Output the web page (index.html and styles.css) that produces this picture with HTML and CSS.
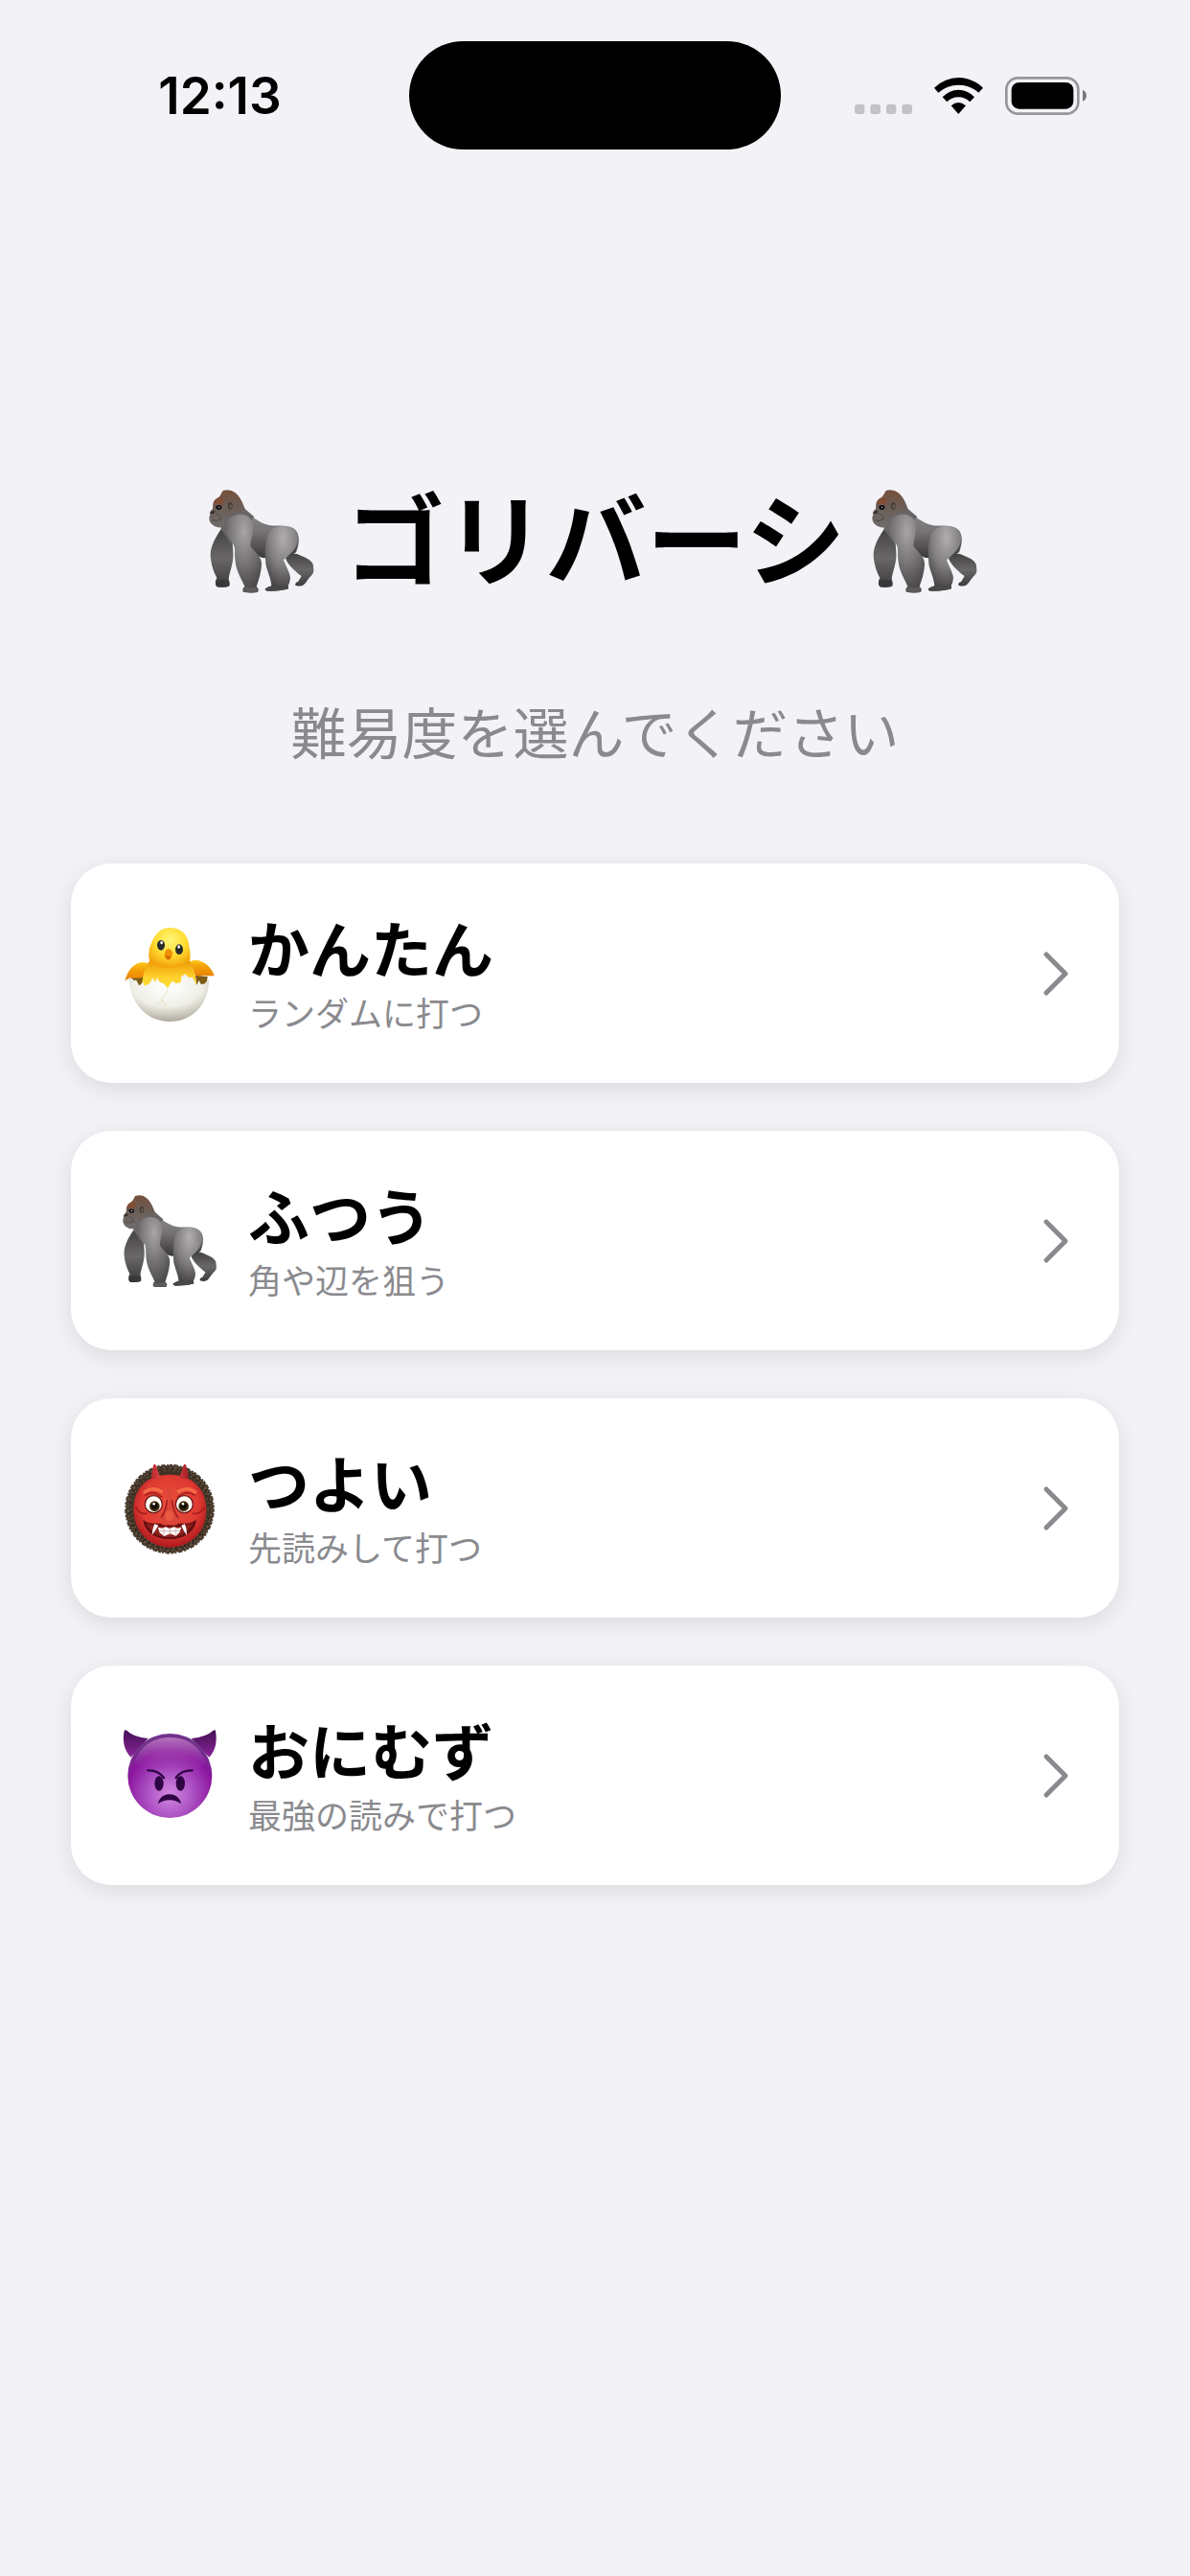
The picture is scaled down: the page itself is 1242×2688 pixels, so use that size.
FILE: index.html
```
<!DOCTYPE html>
<html lang="ja">
<head>
    <meta charset="UTF-8">
    <meta name="viewport" content="width=device-width, initial-scale=1">
    <title>ゴリバーシ</title>
    <link rel="stylesheet" href="styles.css">
</head>
<body>
    <header class="status-bar">
        <div class="status-time">12:13</div>
        <div class="island"></div>
        <div class="status-icons">
            <svg width="60" height="40" viewBox="272 150 180 120" fill="#c3c2c7">
                <rect x="272" y="236" width="31" height="31" rx="9"/>
                <rect x="321" y="236" width="32" height="31" rx="9"/>
                <rect x="371" y="236" width="31" height="31" rx="9"/>
                <rect x="420" y="236" width="32" height="31" rx="9"/>
            </svg>
            <svg width="51" height="40" viewBox="522 150 153 120">
                <path d="M522 185Q556 153 598 153Q641 153 675 185L661 200Q633 176 598 176Q563 176 535 200Z"/>
                <path d="M548 214Q570 191 598 191Q627 191 648 214L634 229Q618 214 598 214Q578 214 562 229Z"/>
                <path d="M575 241Q598 221 621 241L598 267Z"/>
            </svg>
            <svg width="85" height="40" viewBox="744 150 255 120">
                <rect x="748" y="154" width="225" height="112" rx="36" fill="none" stroke="#96959a" stroke-width="8"/>
                <rect x="764" y="168" width="194" height="83" rx="24"/>
                <path d="M987 191Q999 197 999 209Q999 221 987 227Z" fill="#77767a"/>
            </svg>
        </div>
    </header>

    <main class="menu">
        <h1 class="title">
            <svg class="title-icon" viewBox="0 0 450 450">
                <defs>
                    <radialGradient id="shoulder" cx="50%" cy="22%" r="75%">
                        <stop offset="0" stop-color="#a7a5a6"/>
                        <stop offset=".55" stop-color="#767475"/>
                        <stop offset="1" stop-color="#4a4849"/>
                    </radialGradient>
                    <linearGradient id="torso" x1="0" y1="0" x2="0" y2="1">
                        <stop offset="0" stop-color="#8b898a"/>
                        <stop offset=".45" stop-color="#757374"/>
                        <stop offset="1" stop-color="#393738"/>
                    </linearGradient>
                    <radialGradient id="thigh" cx="55%" cy="18%" r="80%">
                        <stop offset="0" stop-color="#b0aeaf"/>
                        <stop offset=".55" stop-color="#7f7d7e"/>
                        <stop offset="1" stop-color="#434142"/>
                    </radialGradient>
                    <linearGradient id="farLimb" x1="0" y1="0" x2="0" y2="1">
                        <stop offset="0" stop-color="#434142"/>
                        <stop offset=".5" stop-color="#696768"/>
                        <stop offset="1" stop-color="#3c3a3b"/>
                    </linearGradient>
                    <linearGradient id="head" x1="0" y1="0" x2="0" y2="1">
                        <stop offset="0" stop-color="#76503b"/>
                        <stop offset=".45" stop-color="#6b5d56"/>
                        <stop offset="1" stop-color="#6e6c6c"/>
                    </linearGradient>
                </defs>
                <g id="gorilla">
                    <path d="M93 185C74 212 58 242 59 270C61 302 71 323 79 339C72 350 74 364 80 367Q98 371 118 365Q121 356 116 341C120 315 132 292 130 260L128 230Z" fill="url(#farLimb)"/>
                    <path d="M78 348Q97 342 114 348Q121 356 117 364Q98 371 80 367Q74 360 78 348Z" fill="#393839"/>
                    <path d="M305 263C318 262 332 263 345 271C366 278 384 292 381 306Q385 320 377 329C367 338 361 350 351 361Q340 368 325 362Q322 354 334 350L344 333C323 318 302 298 294 278Z" fill="url(#farLimb)"/>
                    <path d="M160 126C187 143 206 165 242 174C273 179 300 170 323 187C342 204 336 236 327 259C306 274 258 279 222 276C203 271 188 251 180 246L130 205L105 168Z" fill="url(#torso)"/>
                    <path d="M250 188C276 170 315 174 328 195C342 219 326 252 303 269L288 283C295 303 307 320 309 339Q308 354 302 363L303 373Q281 380 250 380Q230 382 230 374Q239 366 250 364C249 343 239 324 233 300C229 257 228 207 250 188Z" fill="url(#thigh)"/>
                    <path d="M231 372Q244 364 259 365Q281 361 302 363L303 373Q281 380 250 380Q230 382 231 372Z" fill="#494748"/>
                    <path d="M90 160L120 120L166 122L196 148L160 190L124 232Q104 205 92 186Z" fill="#686566"/>
                    <path d="M119 151C143 134 173 138 186 157C200 180 186 210 184 239C198 258 220 273 219 295C218 325 209 348 203 367Q213 375 206 384Q184 387 162 383Q157 374 166 366C160 350 139 318 137 288C134 270 137 249 132 237C121 218 108 207 108 181Q106 161 119 151Z" fill="url(#shoulder)"/>
                    <path d="M166 367Q184 372 203 367Q213 375 206 384Q184 387 162 383Q158 374 166 367Z" fill="#5c5a5b"/>
                    <path d="M95 71Q97 64 112 64Q126 64 136 72C153 85 160 105 168 125C149 134 127 137 115 151C106 160 105 174 94 180C82 185 60 175 56 160Q53 149 58 141Q54 132 66 123L67 108Q68 97 78 91C86 87 91 80 95 71Z" fill="url(#head)"/>
                    <path d="M68 110Q71 95 84 88Q96 84 101 94Q101 103 94 111Q84 105 68 110Z" fill="#824e36"/>
                    <path d="M75 116Q83 107 94 115Q96 123 88 126Q77 126 75 116Z" fill="#100e0e"/>
                    <ellipse cx="121" cy="114" rx="7" ry="11" fill="#403834"/>
                    <ellipse cx="122" cy="115" rx="4" ry="7" fill="#665a54"/>
                    <path d="M57 138Q65 124 74 130L69 138Z" fill="#333132"/>
                    <path d="M64 158Q76 164 88 156M76 137Q88 143 93 157" fill="none" stroke="#494748" stroke-width="3"/>
                    <circle cx="86" cy="118" r="2" fill="#fff"/>
                </g>
            </svg>
            <span class="title-text">ゴリバーシ</span>
            <svg class="title-icon" viewBox="0 0 450 450"><use href="#gorilla"/></svg>
        </h1>
        <p class="prompt">難易度を選んでください</p>

        <div class="levels">
            <button type="button" class="level">
                <svg class="level-icon" viewBox="0 0 390 390">
                    <defs>
                        <radialGradient id="chickHead" cx="52%" cy="32%" r="68%">
                            <stop offset="0" stop-color="#fff679"/>
                            <stop offset=".55" stop-color="#ffdc32"/>
                            <stop offset="1" stop-color="#f3a20b"/>
                        </radialGradient>
                        <linearGradient id="chickBody" x1="0" y1="0" x2="0" y2="1">
                            <stop offset="0" stop-color="#eb9807"/>
                            <stop offset=".5" stop-color="#ffd02c"/>
                            <stop offset="1" stop-color="#ffe438"/>
                        </linearGradient>
                        <linearGradient id="wing" x1="0" y1="0" x2="0" y2="1">
                            <stop offset="0" stop-color="#ffc91d"/>
                            <stop offset=".35" stop-color="#f5a40b"/>
                            <stop offset="1" stop-color="#e97f02"/>
                        </linearGradient>
                        <radialGradient id="shell" cx="48%" cy="25%" r="78%">
                            <stop offset="0" stop-color="#fff"/>
                            <stop offset=".55" stop-color="#f0f0e8"/>
                            <stop offset="1" stop-color="#aaa496"/>
                        </radialGradient>
                    </defs>
                    <path d="M68 207L84 192L112 199L116 237L93 232ZM270 200L308 204L304 231L274 240Z" fill="#7c5a17"/>
                    <path d="M49 218C56 189 74 164 100 160Q122 158 129 168L118 193Q107 211 82 209Q60 207 49 218Z" fill="url(#wing)"/>
                    <path d="M249 158C279 142 318 164 329 202Q309 202 293 200Q275 208 266 196L247 170Z" fill="url(#wing)"/>
                    <path d="M127 154Q187 183 250 154C263 173 270 190 273 230L184 255L102 235C104 200 111 179 127 154Z" fill="url(#chickBody)"/>
                    <path d="M125 119C135 91 147 52 190 51C229 52 247 76 250 108Q257 145 251 156C238 171 209 178 185 176C157 177 132 170 126 154Q122 137 125 119Z" fill="url(#chickHead)"/>
                    <path d="M62 208Q71 207 77 219L84 214L94 233L105 221L112 234L129 223L135 207L144 221L151 207L157 221L169 225L183 240L197 218L210 226L224 222L226 204L238 196L248 207L261 206L273 231L281 216L288 229L299 226L312 212C314 278 271 343 190 345C106 345 63 274 62 208Z" fill="url(#shell)"/>
                    <path d="M184 239L178 259L164 274L164 284L149 292M165 276L180 298" fill="none" stroke="#e0d6ac" stroke-width="2"/>
                    <g fill="#292c2d">
                        <ellipse cx="162" cy="106" rx="12" ry="16"/>
                        <ellipse cx="219" cy="119" rx="12" ry="16"/>
                    </g>
                    <g fill="#fff">
                        <ellipse cx="164" cy="98" rx="4" ry="5"/>
                        <ellipse cx="218" cy="111" rx="4" ry="5"/>
                    </g>
                    <path d="M184 116Q195 117 199 133Q193 151 184 152Q172 146 173 136Q173 123 184 116Z" fill="#ef9304"/>
                    <path d="M176 141Q184 134 194 143Q190 151 184 152Q177 149 176 141Z" fill="#d76b04"/>
                </svg>
                <span class="level-text">
                    <span class="level-name">かんたん</span>
                    <span class="level-desc">ランダムに打つ</span>
                </span>
                <svg class="chevron" viewBox="0 0 52 52"><path d="M16 6L36 26L16 46"/></svg>
            </button>

            <button type="button" class="level">
                <svg class="level-icon" viewBox="7 6 436 436"><use href="#gorilla"/></svg>
                <span class="level-text">
                    <span class="level-name">ふつう</span>
                    <span class="level-desc">角や辺を狙う</span>
                </span>
                <svg class="chevron" viewBox="0 0 52 52"><path d="M16 6L36 26L16 46"/></svg>
            </button>

            <button type="button" class="level">
                <svg class="level-icon" viewBox="0 -4 390 390">
                    <defs>
                        <radialGradient id="oniFace" cx="50%" cy="42%" r="60%">
                            <stop offset="0" stop-color="#e8503b"/>
                            <stop offset=".65" stop-color="#df3b32"/>
                            <stop offset="1" stop-color="#a9151d"/>
                        </radialGradient>
                        <linearGradient id="oniHorn" x1="0" y1="0" x2="1" y2="0">
                            <stop offset="0" stop-color="#b9232a"/>
                            <stop offset=".45" stop-color="#f1645c"/>
                            <stop offset="1" stop-color="#a91a22"/>
                        </linearGradient>
                    </defs>
                    <circle cx="189" cy="193" r="137" fill="#403326"/>
                    <circle cx="189" cy="193" r="136" fill="none" stroke="#4b3e30" stroke-width="9" stroke-dasharray="9 4 13 6 5 3"/>
                    <circle cx="189" cy="193" r="129" fill="none" stroke="#6d5d49" stroke-width="6" stroke-dasharray="4 11 7 8 3 5"/>
                    <circle cx="189" cy="193" r="121" fill="none" stroke="#675742" stroke-width="5" stroke-dasharray="5 9 3 12"/>
                    <circle cx="189" cy="192" r="125" fill="none" stroke="#2a2119" stroke-width="5" stroke-dasharray="5 12 3 9"/>
                    <path d="M76 193C77 127 119 85 189 85C258 85 302 127 304 193C305 262 257 311 190 313C123 312 76 259 76 193Z" fill="url(#oniFace)"/>
                    <path d="M131 96Q134 77 138 57Q142 48 147 57Q153 77 160 94Q145 102 131 96ZM219 94Q228 75 232 57Q237 48 241 57Q246 77 248 96Q233 102 219 94Z" fill="url(#oniHorn)"/>
                    <path d="M108 143Q134 119 167 140M213 140Q245 119 273 143" fill="none" stroke="#f46b45" stroke-width="10"/>
                    <path d="M112 150Q136 132 166 156M213 156Q243 132 268 150M83 187Q95 213 119 206M298 187Q284 213 261 206" fill="none" stroke="#a21b1d" stroke-width="5"/>
                    <path d="M181 126C185 164 172 193 161 216C156 232 169 243 188 241C211 244 221 231 215 216C203 194 193 164 198 126Z" fill="#dc4638"/>
                    <path d="M181 165Q178 201 162 220M196 165Q200 198 216 220" fill="none" stroke="#a61f20" stroke-width="5"/>
                    <ellipse cx="188" cy="213" rx="13" ry="17" fill="#e85a43"/>
                    <path d="M106 226C116 237 137 239 160 238Q170 247 188 243Q207 247 218 238C241 240 260 237 272 226C272 261 235 287 190 287C141 287 110 262 106 226Z" fill="#651010"/>
                    <path d="M116 238Q190 260 262 238C246 269 216 281 190 281C158 281 129 268 116 238Z" fill="#8f201c"/>
                    <path d="M153 250L165 253L177 249L189 254L203 249L214 253L226 250L220 266L209 277L191 270L172 278L157 266Z" fill="#fff"/>
                    <path d="M134 274Q136 251 142 240L154 244Q148 256 134 274ZM243 275Q243 254 237 240L226 244Q231 259 243 275Z" fill="#fff"/>
                    <path d="M155 261Q190 265 223 260M171 253V274M190 256V276M209 253V274" fill="none" stroke="#bd8e85" stroke-width="2"/>
                    <g fill="#fffdf5" stroke="#6e171a" stroke-width="4">
                        <circle cx="139" cy="178" r="27"/>
                        <circle cx="235" cy="178" r="27"/>
                    </g>
                    <g fill="#3e2c0c">
                        <circle cx="142" cy="184" r="16"/>
                        <circle cx="233" cy="184" r="16"/>
                    </g>
                    <g fill="#0e0b07">
                        <circle cx="142" cy="183" r="10"/>
                        <circle cx="233" cy="183" r="10"/>
                    </g>
                    <g fill="#fff">
                        <circle cx="140" cy="177" r="4"/>
                        <circle cx="231" cy="177" r="4"/>
                    </g>
                </svg>
                <span class="level-text">
                    <span class="level-name">つよい</span>
                    <span class="level-desc">先読みして打つ</span>
                </span>
                <svg class="chevron" viewBox="0 0 52 52"><path d="M16 6L36 26L16 46"/></svg>
            </button>

            <button type="button" class="level">
                <svg class="level-icon" viewBox="0 7 390 390">
                    <defs>
                        <radialGradient id="devilFace" cx="50%" cy="72%" r="65%">
                            <stop offset="0" stop-color="#d189e1"/>
                            <stop offset=".4" stop-color="#ae54c5"/>
                            <stop offset=".8" stop-color="#8b159f"/>
                            <stop offset="1" stop-color="#71338a"/>
                        </radialGradient>
                        <linearGradient id="devilShine" x1="0" y1="0" x2="0" y2="1">
                            <stop offset="0" stop-color="#b573bd"/>
                            <stop offset="1" stop-color="#9527aa" stop-opacity="0"/>
                        </linearGradient>
                        <linearGradient id="devilHorn" x1="0" y1="0" x2="0" y2="1">
                            <stop offset="0" stop-color="#431055"/>
                            <stop offset="1" stop-color="#8c2599"/>
                        </linearGradient>
                    </defs>
                    <path d="M47 62Q48 56 55 60Q76 81 122 85L68 144C43 120 42 85 47 62ZM333 62Q333 56 326 60Q304 80 257 85L313 144C337 120 337 86 333 62Z" fill="url(#devilHorn)"/>
                    <circle cx="190" cy="202" r="132" fill="url(#devilFace)"/>
                    <path d="M79 163C95 111 134 82 190 82C246 82 286 111 302 163Q250 190 190 190Q130 190 79 163Z" fill="url(#devilShine)"/>
                    <g fill="#2f0445">
                        <ellipse cx="156" cy="226" rx="14" ry="23"/>
                        <ellipse cx="223" cy="226" rx="14" ry="23"/>
                        <path d="M152 290C159 267 173 260 189 260C205 260 219 268 226 290Q208 278 189 278Q169 278 152 290Z"/>
                    </g>
                    <path d="M121 185Q153 184 171 208M260 185Q226 184 209 208" fill="none" stroke="#2f0445" stroke-width="7" stroke-linecap="round"/>
                </svg>
                <span class="level-text">
                    <span class="level-name">おにむず</span>
                    <span class="level-desc">最強の読みで打つ</span>
                </span>
                <svg class="chevron" viewBox="0 0 52 52"><path d="M16 6L36 26L16 46"/></svg>
            </button>
        </div>
    </main>
</body>
</html>
```
FILE: styles.css
```
body {
    margin: 0;
    background-color: #f2f2f7;
    color: #000;
    font-family: Inter, "Noto Sans CJK JP", sans-serif;
}

.status-bar {
    display: grid;
    grid-template-columns: 1fr 388px 1fr;
    align-items: center;
    padding-top: 43px;
}

.status-time {
    padding-left: 32px;
    text-align: center;
    font-size: 53px;
    font-weight: 600;
    line-height: 60px;
}

.island {
    height: 113px;
    border-radius: 57px;
    background-color: #000;
}

.status-icons {
    display: flex;
    justify-content: center;
    gap: 23px;
    padding-right: 32px;
}

.menu {
    padding: 334px 74px 80px;
}

.title {
    display: flex;
    justify-content: center;
    align-items: center;
    margin: 0;
    font-size: 105px;
    font-weight: 700;
    line-height: 150px;
}

.title-icon {
    width: 150px;
    height: 150px;
}

.title-text {
    padding: 0 10px;
}

.prompt {
    margin: 82px 0 91px;
    text-align: center;
    font-size: 58px;
    line-height: 88px;
    color: #8a8a8e;
}

.levels {
    display: flex;
    flex-direction: column;
    gap: 50px;
}

.level {
    display: flex;
    align-items: center;
    gap: 15px;
    width: 100%;
    padding: 48px 40px;
    border: none;
    border-radius: 42px;
    background-color: #fff;
    box-shadow: 0 6px 24px rgba(0, 0, 0, 0.1);
    color: #000;
    font-family: inherit;
    text-align: left;
    cursor: pointer;
}

.level-icon {
    width: 130px;
    height: 130px;
}

.level-text {
    display: flex;
    flex: 1;
    flex-direction: column;
}

.level-name {
    font-size: 64px;
    font-weight: 700;
    line-height: 85px;
}

.level-desc {
    font-size: 35px;
    line-height: 48px;
    color: #8a8a8e;
}

.chevron {
    width: 52px;
    height: 52px;
    fill: none;
    stroke: #8a8a8e;
    stroke-width: 5;
    stroke-linecap: round;
    stroke-linejoin: round;
}
```
